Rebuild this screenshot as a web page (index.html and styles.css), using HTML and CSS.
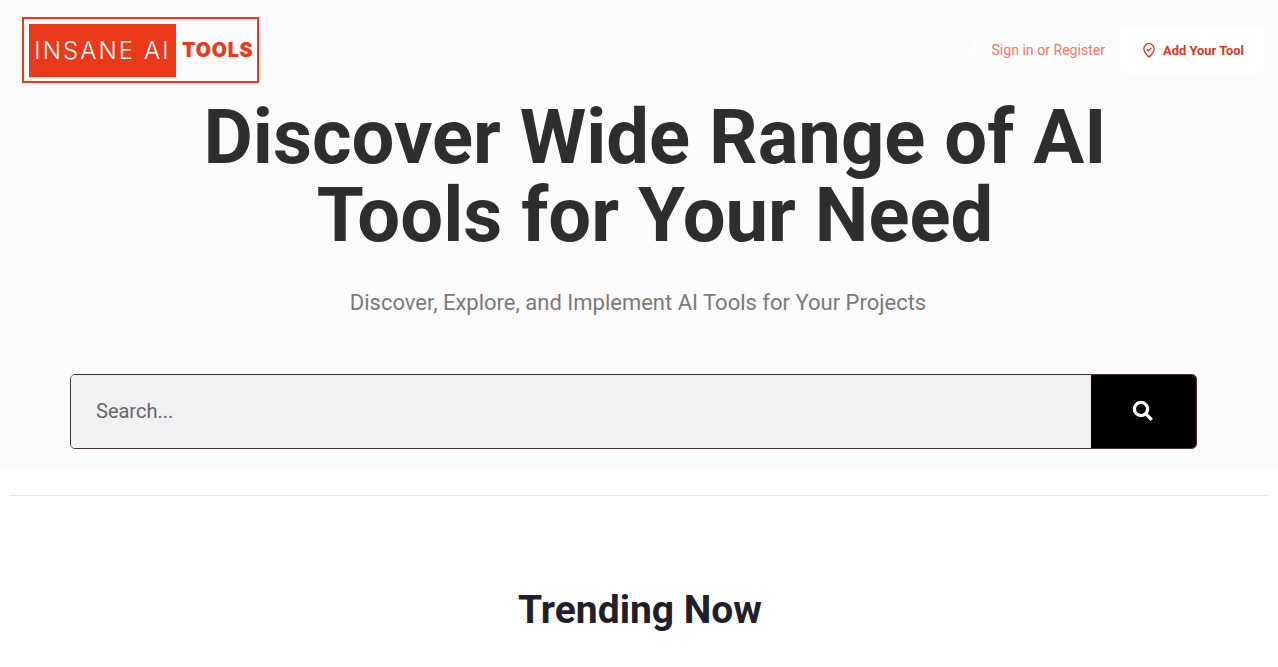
FILE: index.html
```html
<!DOCTYPE html>
<html lang="en">
<head>
    <meta charset="UTF-8">
    <title>Insane AI Tools</title>
    <link rel="stylesheet" href="styles.css">
</head>
<body>
    <section class="hero">
        <header class="top-bar">
            <a class="logo" href="#">
                <span class="logo-box">INSANE AI</span>
                <span class="logo-word">TOOLS</span>
            </a>
            <nav class="top-links">
                <a class="sign-in" href="#">
                    <svg class="user-icon" viewBox="0 0 14 14" width="14" height="14"><circle cx="7" cy="3.6" r="3.4"/><path d="M0 14c0-4 2.6-5.6 7-5.6s7 1.6 7 5.6z"/></svg>
                    <span>Sign in or Register</span>
                </a>
                <a class="add-tool" href="#">
                    <svg class="pin-icon" viewBox="0 0 14 16" width="12" height="15" preserveAspectRatio="none"><path d="M7 15C4.6 12.8 1 9.8 1 6.3A6 5.6 0 0 1 13 6.3C13 9.8 9.4 12.8 7 15z"/><path d="M4.4 6.4l2 2 3.4-3.4"/></svg>
                    <span>Add Your Tool</span>
                </a>
            </nav>
        </header>
        <h1>Discover Wide Range of AI Tools for Your Need</h1>
        <p class="tagline">Discover, Explore, and Implement AI Tools for Your Projects</p>
        <form class="search">
            <input type="text" placeholder="Search...">
            <button type="button" aria-label="Search">
                <svg viewBox="0 0 20 20" width="22" height="22"><circle cx="8.2" cy="8.2" r="6" /><path d="M12.8 12.8l5.2 5.2"/></svg>
            </button>
        </form>
    </section>
    <hr class="divider">
    <h2>Trending Now</h2>
</body>
</html>
```

FILE: styles.css
```css
html, body { margin: 0; padding: 0; }
body { font-family: Roboto, "Liberation Sans", sans-serif; background: #fff; height: 667px; overflow: hidden; }
a { text-decoration: none; }

.hero { background: #fcfcfc; height: 470px; padding: 17px 14px 0 22px; box-sizing: border-box; }
.top-bar { display: flex; justify-content: space-between; align-items: center; height: 66px; }

.logo { display: flex; align-items: center; box-sizing: border-box; width: 237px; height: 66px; padding: 5px; border: 2px solid #ea3a1b; }
.logo-box { display: flex; flex-shrink: 0; align-items: center; justify-content: center; width: 147px; height: 53px; background: #ea3a1b; color: #fff; font-family: Inter, sans-serif; font-weight: 300; font-size: 24px; letter-spacing: 2.1px; white-space: nowrap; }
.logo-word { margin-left: 6px; color: #ea3a1b; font-family: Inter, sans-serif; font-weight: 900; font-size: 19.5px; letter-spacing: 0.9px; }

.top-links { display: flex; align-items: center; }
.sign-in { display: flex; align-items: center; gap: 10px; margin-right: 15px; color: #f5776a; font-size: 14.1px; }
.user-icon { fill: #fff; }
.add-tool { display: flex; align-items: center; gap: 8px; height: 48px; padding: 0 20px 0 23px; background: #fff; border-radius: 5px; color: #e5341a; font-size: 12.9px; font-weight: 700; }
.pin-icon { fill: none; stroke: #e5341a; stroke-width: 1.5; }

h1 { margin: 15px 0 0; padding: 0 100px 0 124px; text-align: center; color: #2e2e2e; font-size: 76px; font-weight: 700; line-height: 78px; }
.tagline { margin: 34px 0 0; padding-right: 10px; text-align: center; color: #7a7a7a; font-size: 22px; line-height: 30px; }

.search { display: flex; box-sizing: border-box; width: 1127px; height: 75px; margin: 56px 0 0 48px; border: 1px solid #45303a; border-radius: 5px; overflow: hidden; }
.search input { flex: 1; min-width: 0; padding: 0 25px 2px; border: none; outline: none; background: #f0f1f3; font-family: inherit; font-size: 20px; }
.search input::placeholder { color: #666; opacity: 1; }
.search button { display: flex; align-items: center; justify-content: center; width: 105px; padding: 0 2px 2px 0; border: none; background: #000; }
.search svg { fill: none; stroke: #fff; stroke-width: 3; }

.divider { margin: 25px 9px 0 10px; border: none; border-top: 1px solid #e6e6e6; }
h2 { margin: 91px 0 0; padding-left: 2px; text-align: center; color: #1f2029; font-size: 39px; font-weight: 700; line-height: 46px; }
```
